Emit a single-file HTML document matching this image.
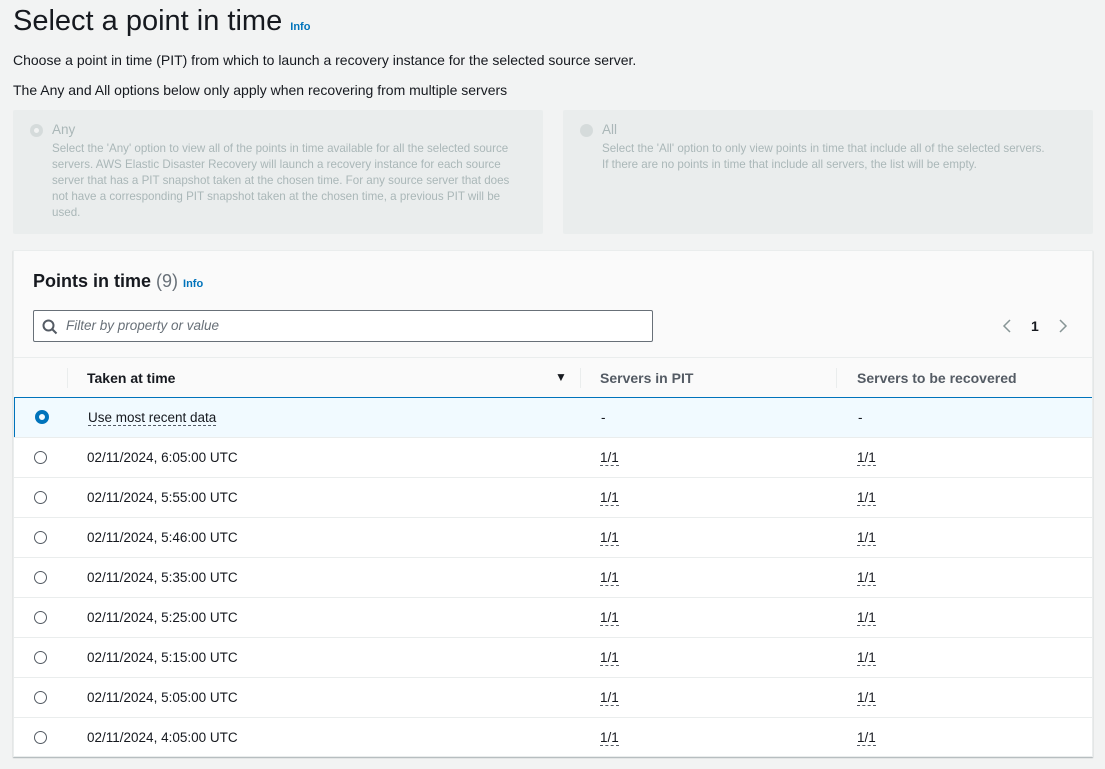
<!DOCTYPE html>
<html><head><style>
*{box-sizing:border-box;margin:0;padding:0}
body{width:1105px;height:769px;background:#f2f3f3;font-family:"Liberation Sans",sans-serif;color:#16191f;position:relative;overflow:hidden}
.abs{position:absolute;white-space:nowrap}
.info{color:#0073bb;font-weight:bold;font-size:11px}
.tile{position:absolute;top:110px;height:124px;background:#eaeded;border-radius:2px}
.tile .r{position:absolute;width:13px;height:13px;border-radius:50%;background:#d5dbdb;top:14px}
.tile .t{position:absolute;font-size:13.5px;color:#aab7b8;top:12px}
.tile .d{position:absolute;font-size:11.6px;color:#aab7b8;line-height:16px;top:31px;white-space:normal}
.box{position:absolute;left:13px;top:250px;width:1080px;height:507px;background:#fafafa;border:1px solid #eaeded;box-shadow:0 1px 1px rgba(0,28,36,.3);overflow:hidden}
.row{position:absolute;left:0;width:1080px;height:40px;background:#fff;border-top:1px solid #eaeded;font-size:13.5px}
.row > span{position:absolute;top:12px;white-space:nowrap}
.rad{position:absolute;left:20px;top:13px;width:13px;height:13px;border:1px solid #545b64;border-radius:50%}
.u{border-bottom:1px dashed #545b64;line-height:15px}
</style></head><body>
<div class="abs" style="left:13px;top:5px;font-size:29px">Select a point in time <span class="info">Info</span></div>
<div class="abs" style="left:13px;top:52px;font-size:14px">Choose a point in time (PIT) from which to launch a recovery instance for the selected source server.</div>
<div class="abs" style="left:13px;top:82px;font-size:14px">The Any and All options below only apply when recovering from multiple servers</div>
<div class="tile" style="left:13px;width:530px">
<div class="r" style="left:17px;box-shadow:inset 0 0 0 4px #d5dbdb,inset 0 0 0 7px #f2f3f3"></div>
<div class="t" style="left:39px">Any</div>
<div class="d" style="left:39px;width:470px">Select the 'Any' option to view all of the points in time available for all the selected source servers. AWS Elastic Disaster Recovery will launch a recovery instance for each source server that has a PIT snapshot taken at the chosen time. For any source server that does not have a corresponding PIT snapshot taken at the chosen time, a previous PIT will be used.</div>
</div>
<div class="tile" style="left:563px;width:530px">
<div class="r" style="left:17px"></div>
<div class="t" style="left:39px">All</div>
<div class="d" style="left:39px;width:450px">Select the 'All' option to only view points in time that include all of the selected servers. If there are no points in time that include all servers, the list will be empty.</div>
</div>
<div class="box">
<div class="abs" style="left:19px;top:20px;font-size:18px;font-weight:bold">Points in time <span style="font-weight:normal;color:#687078">(9)</span> <span class="info">Info</span></div>
<div style="position:absolute;left:19px;top:59px;width:620px;height:32px;background:#fff;border:1px solid #687078;border-radius:2px">
<svg style="position:absolute;left:8px;top:8px" width="16" height="16" viewBox="0 0 16 16"><circle cx="6.5" cy="6.5" r="5" fill="none" stroke="#545b64" stroke-width="2"/><path d="M10 10l4.5 4.5" stroke="#545b64" stroke-width="2"/></svg>
<span class="abs" style="left:32px;top:7px;font-size:13.5px;font-style:italic;color:#687078">Filter by property or value</span></div>
<svg style="position:absolute;left:988px;top:68px" width="10" height="14"><path d="M8 1L2 7l6 6" fill="none" stroke="#879596" stroke-width="1.5"/></svg>
<span class="abs" style="left:1017px;top:67px;font-size:14px;font-weight:bold">1</span>
<svg style="position:absolute;left:1044px;top:68px" width="10" height="14"><path d="M2 1l6 6-6 6" fill="none" stroke="#879596" stroke-width="1.5"/></svg>
<div style="position:absolute;left:0;top:106px;width:1080px;height:41px;border-top:1px solid #eaeded;font-size:14px;font-weight:bold;color:#16191f">
<div style="position:absolute;left:53px;top:10px;height:20px;border-left:1px solid #eaeded"></div>
<span class="abs" style="left:73px;top:12px">Taken at time</span>
<span class="abs" style="left:541px;top:12px;font-size:12px">▼</span>
<div style="position:absolute;left:566px;top:10px;height:20px;border-left:1px solid #eaeded"></div>
<span class="abs" style="left:586px;top:12px;color:#545b64">Servers in PIT</span>
<div style="position:absolute;left:822px;top:10px;height:20px;border-left:1px solid #eaeded"></div>
<span class="abs" style="left:843px;top:12px;color:#545b64">Servers to be recovered</span>
</div>
<div class="row" style="top:146px;background:#f1faff;border:1px solid #0073bb;height:41px">
<div class="rad" style="border:4px solid #0073bb;top:12px;left:20px;width:14px;height:14px"></div>
<span style="left:73px"><span class="u">Use most recent data</span></span><span style="left:586px">-</span><span style="left:843px">-</span></div>
<div class="row" style="top:186px"><div class="rad"></div><span style="left:73px">02/11/2024, 6:05:00 UTC</span><span style="left:586px" class="u">1/1</span><span style="left:843px" class="u">1/1</span></div>
<div class="row" style="top:226px"><div class="rad"></div><span style="left:73px">02/11/2024, 5:55:00 UTC</span><span style="left:586px" class="u">1/1</span><span style="left:843px" class="u">1/1</span></div>
<div class="row" style="top:266px"><div class="rad"></div><span style="left:73px">02/11/2024, 5:46:00 UTC</span><span style="left:586px" class="u">1/1</span><span style="left:843px" class="u">1/1</span></div>
<div class="row" style="top:306px"><div class="rad"></div><span style="left:73px">02/11/2024, 5:35:00 UTC</span><span style="left:586px" class="u">1/1</span><span style="left:843px" class="u">1/1</span></div>
<div class="row" style="top:346px"><div class="rad"></div><span style="left:73px">02/11/2024, 5:25:00 UTC</span><span style="left:586px" class="u">1/1</span><span style="left:843px" class="u">1/1</span></div>
<div class="row" style="top:386px"><div class="rad"></div><span style="left:73px">02/11/2024, 5:15:00 UTC</span><span style="left:586px" class="u">1/1</span><span style="left:843px" class="u">1/1</span></div>
<div class="row" style="top:426px"><div class="rad"></div><span style="left:73px">02/11/2024, 5:05:00 UTC</span><span style="left:586px" class="u">1/1</span><span style="left:843px" class="u">1/1</span></div>
<div class="row" style="top:466px"><div class="rad"></div><span style="left:73px">02/11/2024, 4:05:00 UTC</span><span style="left:586px" class="u">1/1</span><span style="left:843px" class="u">1/1</span></div>
</div>
</body></html>
